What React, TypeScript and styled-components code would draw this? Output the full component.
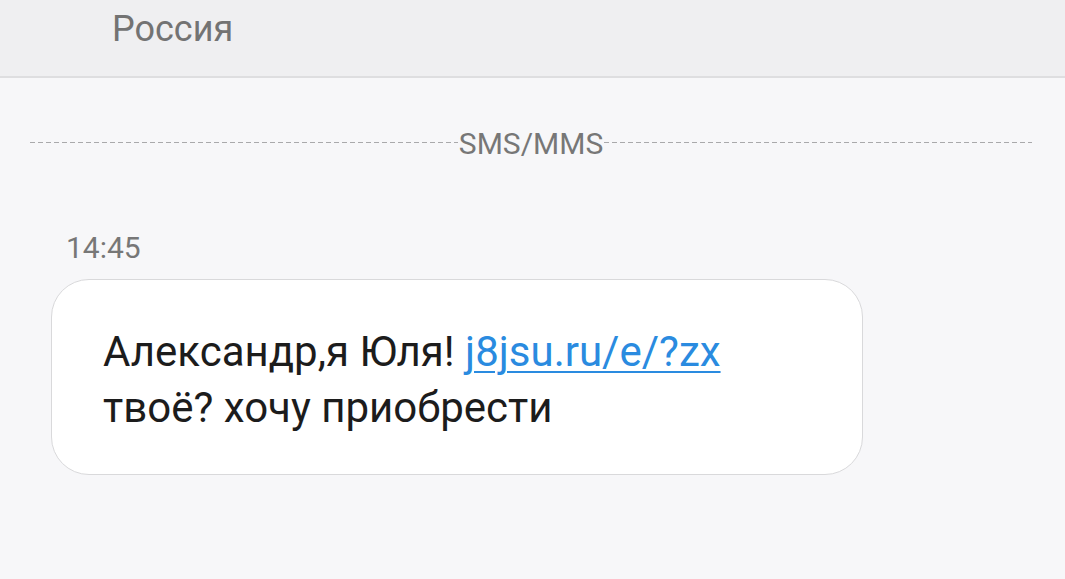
import styled, { createGlobalStyle } from "styled-components"

const GlobalStyle = createGlobalStyle`
  html, body {
    margin: 0;
    padding: 0;
    background: #f7f7f9;
    font-family: Roboto, "Noto Sans", sans-serif;
  }
`

const Screen = styled.div`
  width: 1065px;
  height: 579px;
  overflow: hidden;
  display: flex;
  flex-direction: column;
  background: #f7f7f9;
`

const Header = styled.header`
  height: 78px;
  flex-shrink: 0;
  display: flex;
  align-items: flex-start;
  padding-left: 112px;
  background: #efeff1;
  border-bottom: 2px solid #dedee0;
  box-sizing: border-box;
`

const Title = styled.h1`
  margin: 8px 0 0;
  font-size: 36px;
  font-weight: 400;
  color: #737373;
`

const Thread = styled.main`
  display: flex;
  flex-direction: column;
  padding: 48px 33px 0 30px;
`

const Divider = styled.div`
  display: flex;
  align-items: center;
  gap: 1px;
  color: #777777;
  font-size: 30px;
  line-height: 35px;

  &::before,
  &::after {
    content: "";
    flex: 1;
    height: 1px;
    margin-top: -3px;
    background: repeating-linear-gradient(
      to right,
      #a9a9ab 0 5px,
      transparent 5px 8px
    );
  }
`

const Time = styled.div`
  margin: 69px 0 0 36px;
  font-size: 30px;
  line-height: 35px;
  color: #777777;
`

const Bubble = styled.div`
  margin: 14px 0 0 21px;
  width: 812px;
  height: 196px;
  box-sizing: border-box;
  padding: 44px 40px 0 51px;
  background: #ffffff;
  border: 1px solid #d9d9db;
  border-radius: 38px;
  font-size: 42px;
  line-height: 56px;
  color: #1c1c1c;
`

const Link = styled.a`
  color: #2a8be0;
  text-decoration: underline;
  text-decoration-thickness: 2px;
  text-underline-offset: 5px;
`

export default function App() {
  return (
    <>
      <GlobalStyle />
      <Screen>
        <Header>
          <Title>Россия</Title>
        </Header>
        <Thread>
          <Divider>SMS/MMS</Divider>
          <Time>14:45</Time>
          <Bubble>
            Александр,я Юля! <Link href="#">j8jsu.ru/e/?zx</Link>
            <br />
            твоё? хочу приобрести
          </Bubble>
        </Thread>
      </Screen>
    </>
  )
}
